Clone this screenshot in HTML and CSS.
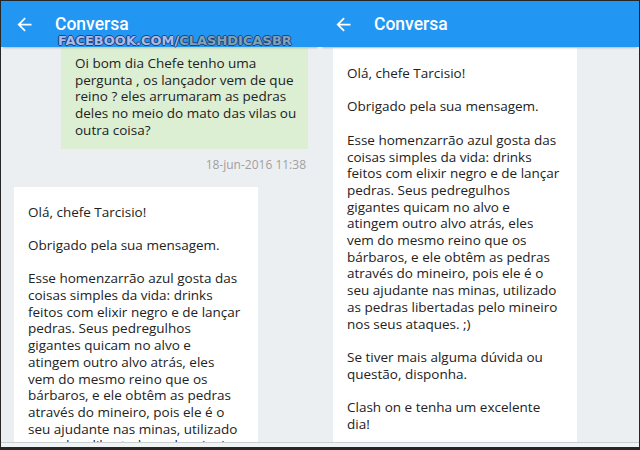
FILE: index.html
```html
<!DOCTYPE html>
<html lang="pt-BR">
<head>
  <meta charset="UTF-8">
  <title>Conversa</title>
  <link rel="stylesheet" href="styles.css">
</head>
<body>

<div class="frame">

  <!-- Left screen -->
  <div class="screen">
    <div class="appbar">
      <svg class="back" viewBox="0 0 24 24"><path d="M20 11H7.83l5.59-5.59L12 4l-8 8 8 8 1.41-1.41L7.83 13H20v-2z"/></svg>
      <span class="title">Conversa</span>
      <div class="watermark"><span class="wm-a">FACEBOOK.COM/</span><span class="wm-b">CLASHDICASBR</span></div>
    </div>
    <div class="thread">
      <div class="bubble sent">
        Oi bom dia Chefe tenho uma<br>
        pergunta , os lançador vem de que<br>
        reino ? eles arrumaram as pedras<br>
        deles no meio do mato das vilas ou<br>
        outra coisa?
      </div>
      <div class="stamp">18-jun-2016 11:38</div>
      <div class="bubble received">
        Olá, chefe Tarcisio!<br><br>
        Obrigado pela sua mensagem.<br><br>
        Esse homenzarrão azul gosta das<br>
        coisas simples da vida: drinks<br>
        feitos com elixir negro e de lançar<br>
        pedras. Seus pedregulhos<br>
        gigantes quicam no alvo e<br>
        atingem outro alvo atrás, eles<br>
        vem do mesmo reino que os<br>
        bárbaros, e ele obtêm as pedras<br>
        através do mineiro, pois ele é o<br>
        seu ajudante nas minas, utilizado<br>
        as pedras libertadas pelo mineiro
      </div>
    </div>
    <div class="navedge"></div>
  </div>

  <!-- Right screen -->
  <div class="screen">
    <div class="appbar">
      <svg class="back" viewBox="0 0 24 24"><path d="M20 11H7.83l5.59-5.59L12 4l-8 8 8 8 1.41-1.41L7.83 13H20v-2z"/></svg>
      <span class="title">Conversa</span>
    </div>
    <div class="thread">
      <div class="bubble received top">
        Olá, chefe Tarcisio!<br><br>
        Obrigado pela sua mensagem.<br><br>
        Esse homenzarrão azul gosta das<br>
        coisas simples da vida: drinks<br>
        feitos com elixir negro e de lançar<br>
        pedras. Seus pedregulhos<br>
        gigantes quicam no alvo e<br>
        atingem outro alvo atrás, eles<br>
        vem do mesmo reino que os<br>
        bárbaros, e ele obtêm as pedras<br>
        através do mineiro, pois ele é o<br>
        seu ajudante nas minas, utilizado<br>
        as pedras libertadas pelo mineiro<br>
        nos seus ataques. ;)<br><br>
        Se tiver mais alguma dúvida ou<br>
        questão, disponha.<br><br>
        Clash on e tenha um excelente<br>
        dia!
      </div>
    </div>
    <div class="navedge"></div>
  </div>

</div>

</body>
</html>
```

FILE: styles.css
```css
html, body {
  margin: 0;
  padding: 0;
}
body {
  background: #262626;
  width: 640px;
  height: 450px;
  overflow: hidden;
}
.frame {
  display: flex;
  height: 446px;
  padding: 1px 1px 0 1px;
}
.screen {
  width: 319px;
  display: flex;
  flex-direction: column;
  background: #eceff1;
  position: relative;
}
.appbar {
  height: 46px;
  background: #2196f3;
  display: flex;
  align-items: center;
  position: relative;
  z-index: 2;
  box-shadow: 0 3px 2px -2px rgba(0,0,0,0.22);
  flex-shrink: 0;
}
.back {
  width: 21px;
  height: 21px;
  fill: #fff;
  margin-left: 13px;
  margin-top: 1px;
}
.title {
  margin-left: 20px;
  color: #fff;
  font-family: Roboto, "Noto Sans", sans-serif;
  font-weight: 500;
  font-size: 17.5px;
}
.watermark {
  position: absolute;
  left: 57px;
  top: 33px;
  font-family: "DejaVu Sans", sans-serif;
  font-weight: bold;
  font-size: 13px;
  line-height: 14px;
  text-shadow: 1px 0 0 #23427a, -1px 0 0 #23427a, 0 1px 0 #23427a, 0 -1px 0 #23427a;
}
.wm-a {
  color: #a9bbe8;
}
.wm-b {
  color: #7fa3b6;
}
.thread {
  flex: 1;
  overflow: hidden;
  display: flex;
  flex-direction: column;
  padding-top: 1px;
}
.bubble {
  font-family: "Open Sans", sans-serif;
  font-size: 13.5px;
  line-height: 16.7px;
  color: #222;
  white-space: nowrap;
  flex-shrink: 0;
}
.sent {
  background: #dcefd2;
  margin: 0 12px 0 60px;
  padding: 7px 14px 10px;
}
.stamp {
  text-align: right;
  padding-right: 14px;
  margin-top: 8px;
  font-family: "Open Sans", sans-serif;
  font-size: 12px;
  color: #a0a0a0;
  line-height: 16px;
}
.received {
  background: #fff;
  width: 216px;
  margin: 14px 0 0 13px;
  padding: 17px 14px 10px;
}
.received.top {
  margin-top: 0;
  padding-top: 17px;
}
.navedge {
  height: 4px;
  flex-shrink: 0;
  border-top: 1px solid #c9ced2;
  background: #f2f3f4;
}
```
